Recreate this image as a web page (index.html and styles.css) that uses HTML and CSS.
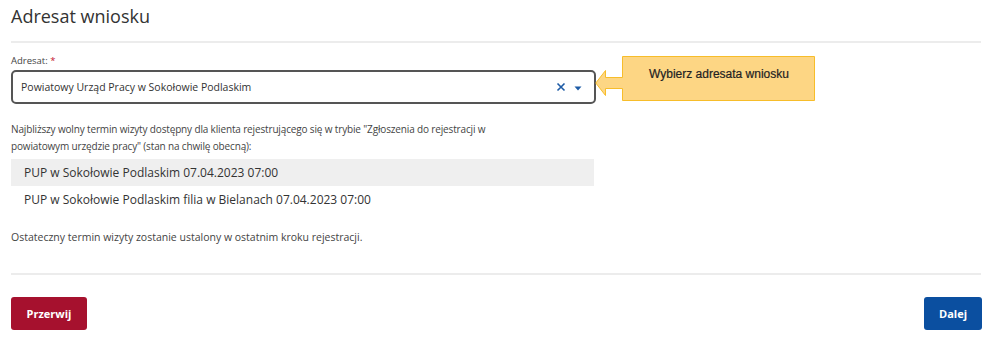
FILE: index.html
```html
<!DOCTYPE html>
<html lang="pl">
<head>
<meta charset="utf-8">
<title>Adresat wniosku</title>
<link rel="stylesheet" href="styles.css">
</head>
<body>
<div class="page">
  <h1 class="title">Adresat wniosku</h1>
  <div class="divider divider-top"></div>

  <div class="field">
    <label class="label">Adresat: <span class="req">*</span></label>
    <div class="select">
      <span class="select-value">Powiatowy Urząd Pracy w Sokołowie Podlaskim</span>
      <span class="select-icons">
        <svg class="icon-clear" width="10" height="10" viewBox="0 0 10 10"><path d="M1.5 1.5 L8.5 8.5 M8.5 1.5 L1.5 8.5" stroke="#1d5ba6" stroke-width="1.6" fill="none"/></svg>
        <svg class="icon-caret" width="8" height="5" viewBox="0 0 8 5"><path d="M0.5 0.5 H7.5 L4 4.5 Z" fill="#1d5ba6"/></svg>
      </span>
    </div>
    <div class="callout">
      <svg class="callout-shape" width="222" height="46" viewBox="0 0 222 46">
        <path d="M27.5 0.5 H219.5 V44.5 H27.5 V32.5 H10.5 V39.5 L0.8 27 L10.5 14.5 V21.5 H27.5 Z" fill="#fdd684" stroke="#f7bd2a" stroke-width="1"/>
      </svg>
      <span class="callout-text">Wybierz adresata wniosku</span>
    </div>
  </div>

  <p class="info">Najbliższy wolny termin wizyty dostępny dla klienta rejestrującego się w trybie "Zgłoszenia do rejestracji w<br>powiatowym urzędzie pracy" (stan na chwilę obecną):</p>

  <ul class="slots">
    <li class="slot slot-alt">PUP w Sokołowie Podlaskim 07.04.2023 07:00</li>
    <li class="slot">PUP w Sokołowie Podlaskim filia w Bielanach 07.04.2023 07:00</li>
  </ul>

  <p class="note">Ostateczny termin wizyty zostanie ustalony w ostatnim kroku rejestracji.</p>

  <div class="divider divider-bottom"></div>

  <div class="actions">
    <button class="btn btn-cancel">Przerwij</button>
    <button class="btn btn-next">Dalej</button>
  </div>
</div>
</body>
</html>
```

FILE: styles.css
```css
* { box-sizing: border-box; }
html, body {
  margin: 0;
  padding: 0;
  background: #fff;
}
body {
  font-family: "Open Sans", "Noto Sans", sans-serif;
  color: #333;
}
.page {
  width: 992px;
  padding: 0 11px;
}
.title {
  margin: 4px 0 0;
  height: 24px;
  font-size: 18px;
  line-height: 24px;
  font-weight: 400;
  color: #333;
}
.divider {
  height: 2px;
  background: #ececec;
  width: 970px;
}
.divider-top {
  margin-top: 13px;
}
.field {
  position: relative;
  margin-top: 11px;
  width: 585px;
}
.label {
  display: block;
  font-size: 9.5px;
  line-height: 14px;
  height: 14px;
  color: #444;
}
.req { color: #c4122f; }
.select {
  margin-top: 2px;
  height: 34px;
  border: 2px solid #555;
  border-radius: 5px;
  display: flex;
  align-items: center;
  justify-content: space-between;
  padding: 0 12px 0 8px;
}
.select-value {
  font-size: 10.5px;
  color: #333;
}
.select-icons {
  display: flex;
  align-items: center;
  gap: 8px;
}
.icon-caret { margin-top: 3px; }
.callout {
  position: absolute;
  left: 584px;
  top: 2px;
  width: 222px;
  height: 46px;
}
.callout-shape {
  position: absolute;
  left: 0;
  top: 0;
}
.callout-text {
  position: absolute;
  left: 28px;
  top: 11px;
  width: 192px;
  text-align: center;
  font-family: "Liberation Sans", Arial, sans-serif;
  font-size: 12px;
  color: #222;
  -webkit-text-stroke: 0.2px #222;
}
.info {
  margin: 17px 0 0;
  width: 590px;
  font-size: 10px;
  letter-spacing: -0.15px;
  line-height: 16.5px;
  color: #444;
}
.slots {
  list-style: none;
  margin: 5px 0 0;
  padding: 0;
  width: 583px;
}
.slot {
  height: 27px;
  line-height: 27px;
  padding-left: 13px;
  font-size: 12px;
  color: #333;
}
.slot-alt { background: #efefef; }
.note {
  margin: 16px 0 0;
  font-size: 10.5px;
  line-height: 16px;
  color: #444;
}
.divider-bottom {
  margin-top: 28px;
}
.actions {
  display: flex;
  justify-content: space-between;
  width: 971px;
  margin-top: 22px;
}
.btn {
  height: 33px;
  border: none;
  border-radius: 3px;
  color: #fff;
  font-family: "Open Sans", sans-serif;
  font-weight: 700;
  font-size: 11px;
  padding: 0;
}
.btn-cancel {
  width: 76px;
  background: #a6112e;
}
.btn-next {
  width: 58px;
  background: #0b4fa0;
}
```
